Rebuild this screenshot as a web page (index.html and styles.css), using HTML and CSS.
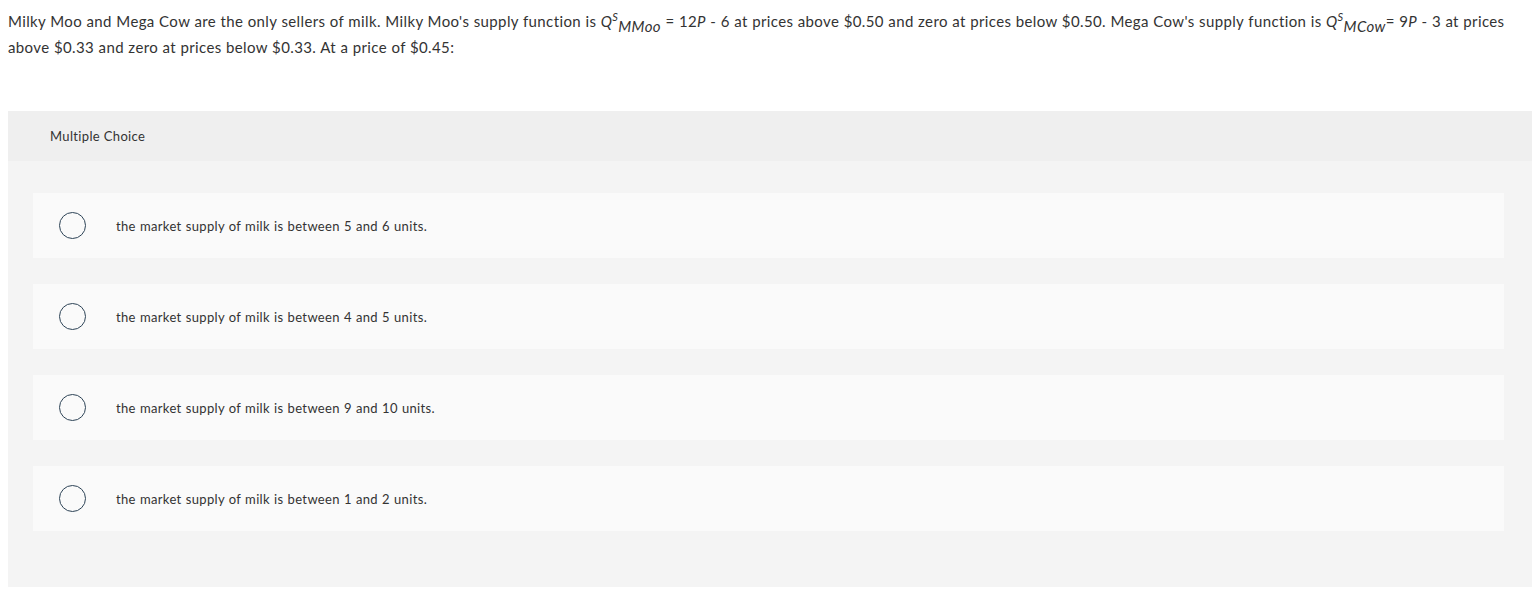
FILE: index.html
```html
<!DOCTYPE html>
<html lang="en">
<head>
<meta charset="utf-8">
<title>Multiple Choice</title>
<link rel="stylesheet" href="styles.css">
</head>
<body>
<p class="question">Milky Moo and Mega Cow are the only sellers of milk. Milky Moo's supply function is <i>Q</i><sup class="sup"><i>S</i></sup><sub class="sub"><i>MMoo</i></sub>&nbsp;= 12<i>P</i> - 6 at prices above $0.50 and zero at prices below $0.50. Mega Cow's supply function is <i>Q</i><sup class="sup"><i>S</i></sup><sub class="sub"><i>MCow</i></sub>= 9<i>P</i> - 3 at prices above $0.33 and zero at prices below $0.33. At a price of $0.45:</p>

<section class="panel">
  <header class="panel-head">Multiple Choice</header>
  <div class="panel-body">
    <label class="option"><span class="radio"></span><span class="option-text">the market supply of milk is between 5 and 6 units.</span></label>
    <label class="option"><span class="radio"></span><span class="option-text">the market supply of milk is between 4 and 5 units.</span></label>
    <label class="option"><span class="radio"></span><span class="option-text">the market supply of milk is between 9 and 10 units.</span></label>
    <label class="option"><span class="radio"></span><span class="option-text">the market supply of milk is between 1 and 2 units.</span></label>
  </div>
</section>
</body>
</html>
```
FILE: styles.css
```css
html, body {
  margin: 0;
  padding: 0;
  background: #ffffff;
}
body {
  padding: 8px;
  font-family: Lato, "Liberation Sans", sans-serif;
  color: #333333;
}
.question {
  margin: 0;
  font-size: 15px;
  letter-spacing: 0.38px;
  word-spacing: 0.2px;
  line-height: 26px;
  color: #333333;
}
.question i {
  font-style: italic;
}
.sup {
  font-size: 11px;
  vertical-align: 6px;
  line-height: 0;
}
.sub {
  font-size: 15px;
  vertical-align: -5px;
  line-height: 0;
}
.panel {
  margin-top: 51px;
  width: 1524px;
  background: #f4f4f4;
}
.panel-head {
  height: 50px;
  background: #efefef;
  display: flex;
  align-items: center;
  padding-left: 42px;
  font-size: 13px;
  letter-spacing: 0.35px;
  color: #333333;
}
.panel-body {
  padding: 32px 28px 56px 25px;
  display: flex;
  flex-direction: column;
  gap: 26px;
}
.option {
  height: 65px;
  background: #fafafa;
  display: flex;
  align-items: center;
  padding-left: 26px;
}
.radio {
  width: 25px;
  height: 25px;
  border: 1.5px solid #2d4356;
  border-radius: 50%;
  flex: none;
}
.option-text {
  margin-left: 30px;
  font-size: 13px;
  letter-spacing: 0.35px;
  word-spacing: 0.4px;
  color: #333333;
}
```
